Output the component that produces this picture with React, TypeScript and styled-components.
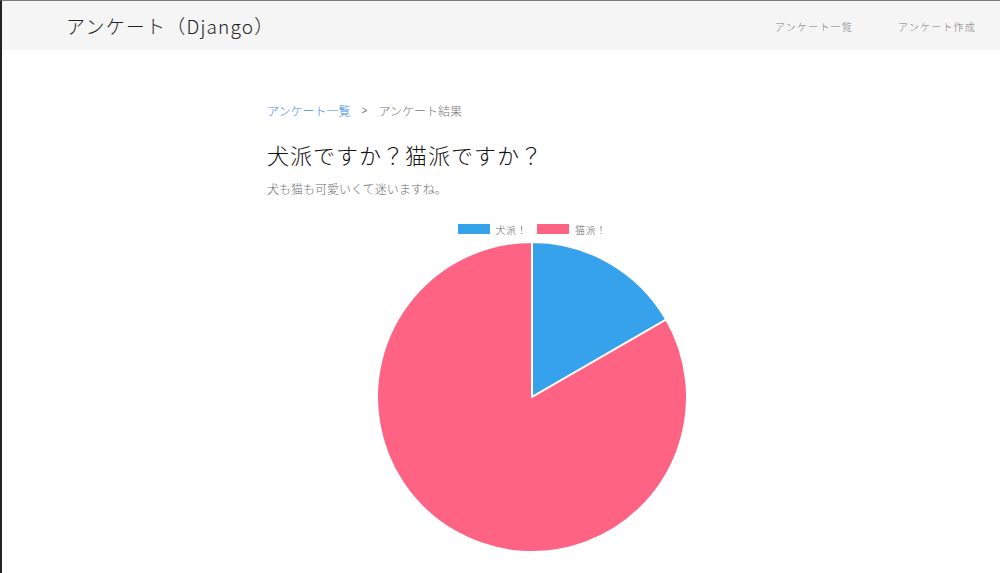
import React from 'react';
import styled, { createGlobalStyle } from 'styled-components';

const GlobalStyle = createGlobalStyle`
  html, body {
    margin: 0;
    padding: 0;
    background: #ffffff;
  }
  body {
    font-family: 'Noto Sans CJK JP', 'Noto Sans', sans-serif;
  }
`;

interface Slice {
  label: string;
  value: number;
  color: string;
}

const data: Slice[] = [
  { label: '犬派！', value: 1, color: '#36a2eb' },
  { label: '猫派！', value: 5, color: '#ff6384' }
];

const R = 155;

const polar = (angle: number) => {
  const rad = ((angle - 90) * Math.PI) / 180;
  return [R + Math.cos(rad) * R, R + Math.sin(rad) * R];
};

const PieChart = ({ slices }: { slices: Slice[] }) => {
  const total = slices.reduce((s, d) => s + d.value, 0);
  let start = 0;
  return (
    <svg width={R * 2 + 4} height={R * 2 + 4} viewBox={`-2 -2 ${R * 2 + 4} ${R * 2 + 4}`}>
      {slices.map((d) => {
        const sweep = (d.value / total) * 360;
        const [x1, y1] = polar(start);
        const [x2, y2] = polar(start + sweep);
        const large = sweep > 180 ? 1 : 0;
        const path = `M ${R} ${R} L ${x1} ${y1} A ${R} ${R} 0 ${large} 1 ${x2} ${y2} Z`;
        start += sweep;
        return <path key={d.label} d={path} fill={d.color} stroke="#ffffff" strokeWidth={2} strokeLinejoin="round" />;
      })}
    </svg>
  );
};

const App = () => {
  return (
    <>
      <GlobalStyle />
      <S.Frame>
        <S.Header>
          <S.Brand>アンケート（Django）</S.Brand>
          <S.Nav>
            <S.NavLink>アンケート一覧</S.NavLink>
            <S.NavLink>アンケート作成</S.NavLink>
          </S.Nav>
        </S.Header>
        <S.Main>
          <S.Breadcrumb>
            <S.CrumbLink>アンケート一覧</S.CrumbLink>
            <S.CrumbSep>&gt;</S.CrumbSep>
            <S.CrumbCurrent>アンケート結果</S.CrumbCurrent>
          </S.Breadcrumb>
          <S.Title>犬派ですか？猫派ですか？</S.Title>
          <S.Description>犬も猫も可愛いくて迷いますね。</S.Description>
          <S.Chart>
            <S.Legend>
              {data.map((d) => (
                <S.LegendItem key={d.label}>
                  <S.LegendBox $color={d.color} />
                  {d.label}
                </S.LegendItem>
              ))}
            </S.Legend>
            <PieChart slices={data} />
          </S.Chart>
        </S.Main>
      </S.Frame>
    </>
  );
};

export default App;

const S = {
  Frame: styled.div`
    box-sizing: border-box;
    width: 1000px;
    height: 573px;
    overflow: hidden;
    border-top: 1px solid #7a7a7a;
    border-left: 2px solid #222222;
    background: #ffffff;
  `,
  Header: styled.header`
    display: flex;
    align-items: center;
    justify-content: space-between;
    height: 49px;
    padding: 0 24px 0 64px;
    background: #f5f5f5;
  `,
  Brand: styled.div`
    font-size: 19px;
    font-weight: 300;
    letter-spacing: 1.2px;
    color: #222222;
  `,
  Nav: styled.nav`
    display: flex;
    gap: 45px;
    padding-top: 1px;
  `,
  NavLink: styled.a`
    font-size: 10px;
    font-weight: 300;
    letter-spacing: 1.2px;
    color: #7a7a7a;
  `,
  Main: styled.main`
    display: flex;
    flex-direction: column;
    width: 530px;
    margin-left: 265px;
    padding-top: 51px;
  `,
  Breadcrumb: styled.div`
    display: flex;
    align-items: center;
    gap: 11px;
    font-size: 12px;
    font-weight: 300;
    line-height: 20px;
  `,
  CrumbLink: styled.a`
    color: #3d8be6;
  `,
  CrumbSep: styled.span`
    color: #777777;
    font-size: 10px;
    font-family: 'Liberation Sans', sans-serif;
  `,
  CrumbCurrent: styled.span`
    color: #777777;
  `,
  Title: styled.h1`
    margin: 17px 0 0;
    font-size: 22px;
    font-weight: 300;
    letter-spacing: 1px;
    line-height: 32px;
    color: #111111;
  `,
  Description: styled.p`
    margin: 10px 0 0;
    font-size: 12px;
    font-weight: 300;
    line-height: 18px;
    color: #6f6f6f;
  `,
  Chart: styled.div`
    display: flex;
    flex-direction: column;
    align-items: center;
    margin-top: 23px;
  `,
  Legend: styled.div`
    display: flex;
    gap: 10px;
    height: 16px;
    align-items: center;
    margin-bottom: 3px;
  `,
  LegendItem: styled.div`
    display: flex;
    align-items: center;
    gap: 6px;
    font-size: 10px;
    font-weight: 300;
    letter-spacing: 0.5px;
    color: #666666;
  `,
  LegendBox: styled.span<{ $color: string }>`
    display: inline-block;
    width: 30px;
    height: 8px;
    background: ${(p) => p.$color};
    border: 1px solid ${(p) => p.$color};
  `
};
